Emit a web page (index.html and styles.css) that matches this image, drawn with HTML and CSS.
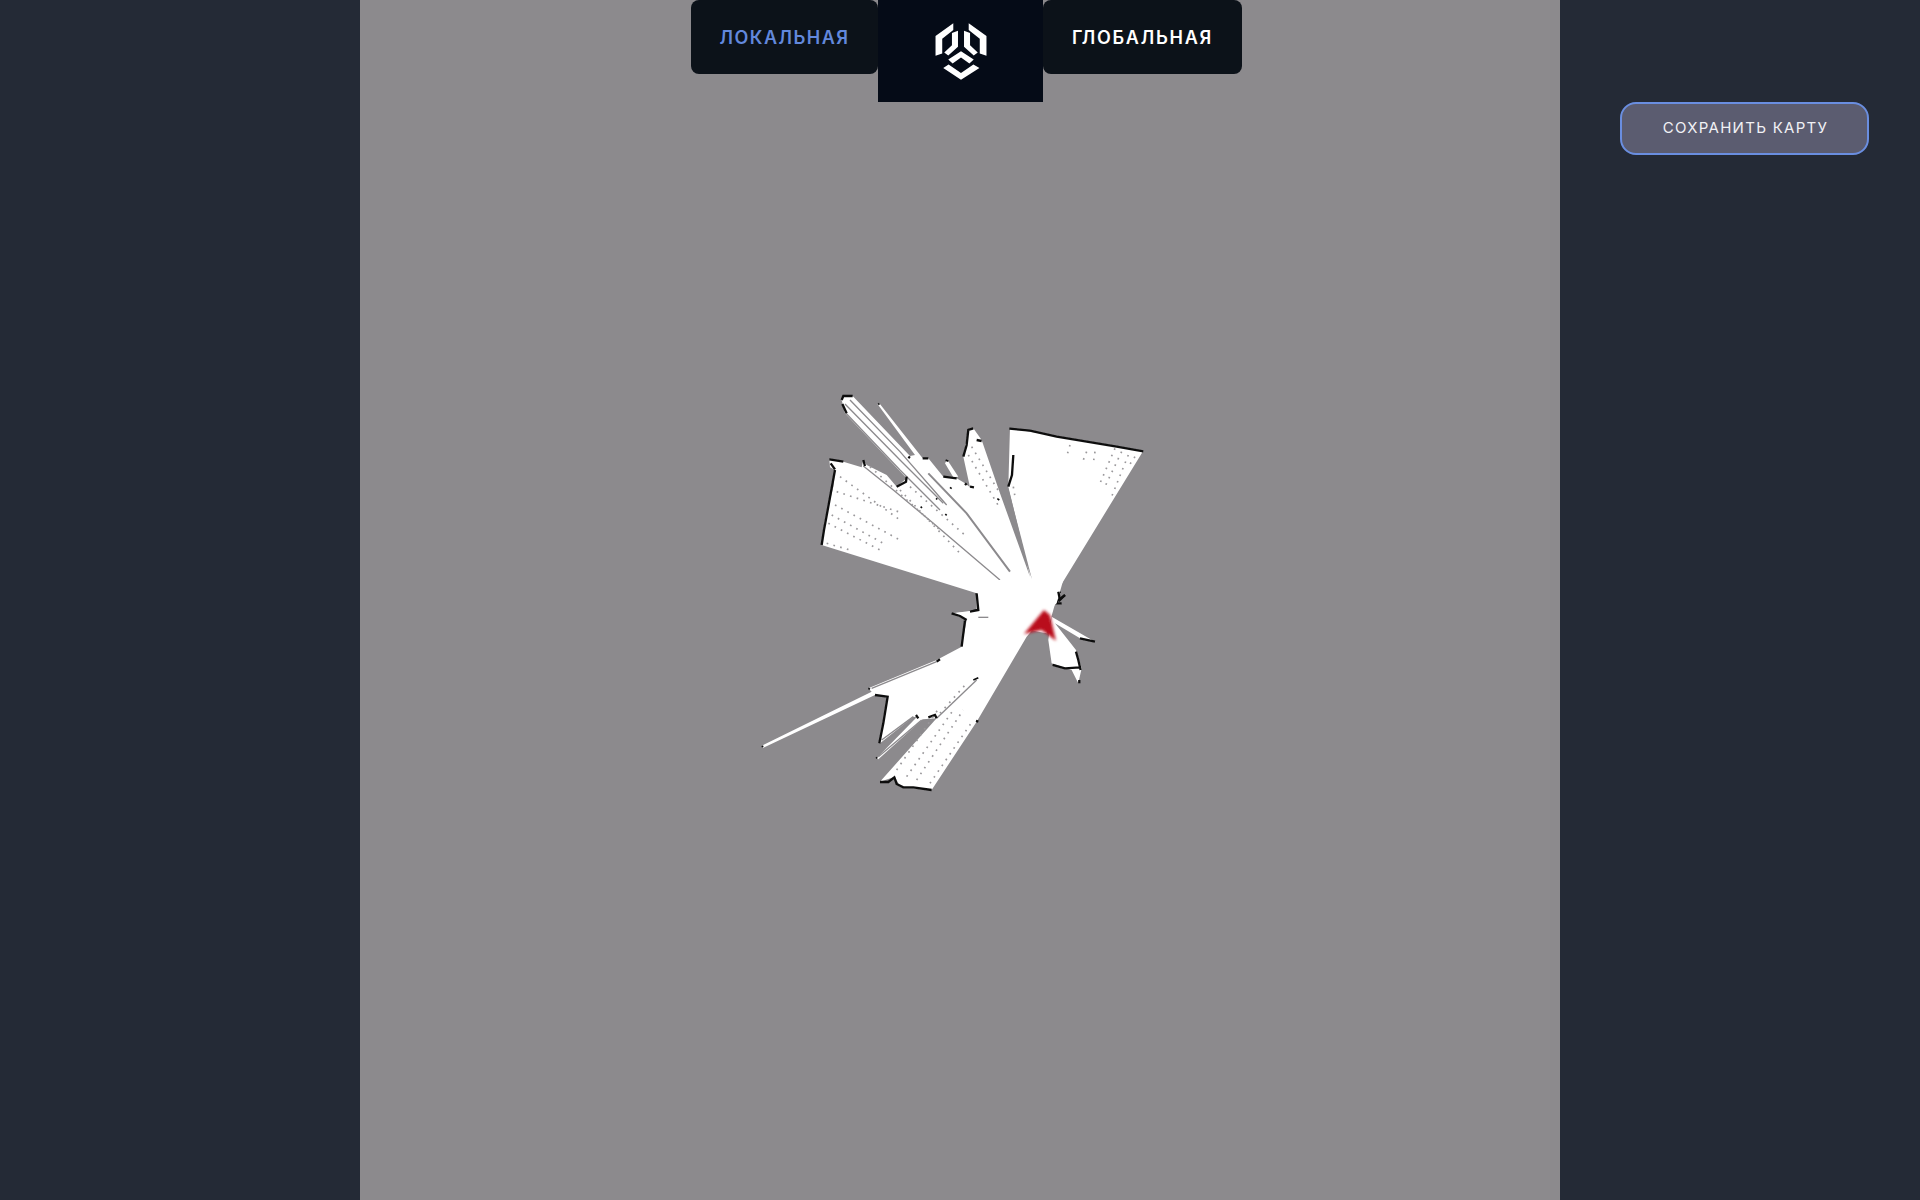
FILE: index.html
```html
<!DOCTYPE html>
<html>

<head>
    <title>Карта</title>
    <link rel="stylesheet" href="styles.css">
</head>

<body>
    <div class="side"></div>

    <div class="map">
        <nav class="tabs">
            <a class="tab tab-left active">ЛОКАЛЬНАЯ</a>
            <div class="logo">
                <svg width="54" height="62" viewBox="100 60 160 185">
                    <polygon points="157,70 157,90 124,116 124,160 104,167 104,108" />
                    <polygon points="153,99 171,92 171,140 142,166 130,157 153,135" />
                    <polygon points="203,70 203,90 236,116 236,160 256,167 256,108" />
                    <polygon points="207,99 189,92 189,140 218,166 230,157 207,135" />
                    <polygon points="180,153 218,178 205,190 180,172 155,190 142,178" />
                    <polygon points="127,203 143,193 180,218 217,193 235,203 180,238" />
                </svg>
            </div>
            <a class="tab tab-right">ГЛОБАЛЬНАЯ</a>
        </nav>

        <svg class="scan" width="1200" height="1200" viewBox="360 0 1200 1200">
            <defs>
                <filter id="soft"><feGaussianBlur stdDeviation="0.4" /></filter>
                <filter id="softer"><feGaussianBlur stdDeviation="4" /></filter>
            </defs>

            <g filter="url(#soft)">
                <!-- upper half of the scan -->
                <g transform="translate(800 380) scale(0.3333)">
                    <polygon class="free" points="65,495 75,420 100,320 105,270 90,262 88,238 130,245 185,262 190,240 200,255 260,285 290,320 320,295 135,100 125,60 130,48 158,48 330,228 345,225 233,73 238,70 368,235 385,235 430,290 470,295 495,310 510,322 490,230 505,150 520,145 545,180 600,340 690,590 625,320 630,145 1030,212 780,620 740,760 520,720 460,700 530,690 530,640" />
                    <polygon class="free" points="435,250 442,240 475,290 460,292" />
                    <polygon class="sliver" points="590,305 625,325 696,598" />
                    <polyline class="gap" points="190,258 280,330 400,430 600,600" />
                    <polyline class="gap-wide" points="385,280 500,400 630,575" />
                    <polyline class="gap" points="135,72 300,240 430,370" />
                    <polyline class="gap" points="150,60 300,215 440,375" />
                    <polyline class="gap" points="138,100 300,270 420,390" />

                    <path class="wall" d="M65 495 L72 450 L85 380 L105 270" />
                    <path class="wall" d="M88 238 L130 245 M92 250 L105 268" />
                    <path class="wall" d="M125 60 L130 48 L158 48 M127 72 L140 100" />
                    <path class="wall" d="M190 240 L195 258 M290 320 L318 305 L320 290 M325 230 L330 234 M368 235 L385 235" />
                    <path class="wall" d="M430 290 L470 295 M495 310 L500 315 M510 320 L522 322" />
                    <path class="wall" d="M490 230 L500 195 L505 150 L520 145 M530 180 L545 183" />
                    <path class="wall" d="M640 225 L636 285 L625 320" />
                    <path class="wall" d="M628 146 L690 152 L770 170 L860 185 L950 200 L1030 214" />
                    <path class="wall-thin" d="M235 70 L238 74 M437 240 L445 244 M450 322 L455 326 M408 355 L412 358 M362 380 L366 384 M436 402 L440 406 M592 356 L598 360" />
                    <path class="wall" d="M530 640 L535 660 L535 690 L515 695 M775 630 L780 640 M770 665 L795 645 M765 670 L785 670" />

                    <path class="dots" d="M110 335 L295 395 M105 375 L300 480 M95 405 L250 490 M85 430 L240 510 M80 490 L150 510 M120 290 L300 420" />
                    <path class="dots" d="M210 260 L420 450 M300 330 L480 520 M330 320 L500 470" />
                    <path class="dots" d="M505 225 L600 385 M515 200 L600 340 M640 320 L645 350" />
                    <path class="dots" d="M945 205 L900 310 M965 215 L915 320 M985 225 L935 350 M810 195 L800 230 M860 215 L850 240 M885 215 L880 250 M1005 230 L985 260" />
                </g>

                <!-- lower half of the scan -->
                <g transform="translate(740 580) scale(0.3333)">
                    <polygon class="free" points="710,0 710,40 715,90 690,95 635,100 680,120 665,200 590,240 385,325 395,335 65,497 70,503 405,345 443,350 420,490 520,410 530,412 410,535 415,538 548,418 590,415 420,605 465,590 480,620 575,630 710,425 860,170 920,100 950,70 970,0" />
                    <polygon class="free" points="935,110 1065,185 1020,175 945,130 1008,210 1025,265 1015,310 995,270 935,250 925,180" />
                    <polyline class="gap-line" points="590,415 710,300" />
                    <polyline class="gap-line" points="395,325 590,245" />
                    <polyline class="gap-line" points="425,480 520,410" />
                    <polyline class="gap-line" points="415,530 545,420" />

                    <path class="wall" d="M710 40 L715 90 L690 95 M635 100 L660 108 L680 120 M675 122 L665 200 M590 245 L600 238" />
                    <path class="wall" d="M405 345 L443 350 L430 430 L418 490 M528 405 L535 415 M565 412 L585 405 L590 415" />
                    <path class="wall" d="M420 606 L445 606 L463 592 L470 612 L490 622 L520 622 L575 630 M708 423 L715 425" />
                    <path class="wall" d="M938 255 L975 265 L1020 262 M1008 215 L1015 240 L1022 270 M1018 300 L1018 310 M1020 175 L1065 185" />
                    <path class="wall" d="M955 35 L960 60 L975 45" />
                    <path class="wall-thin" d="M65 500 L70 498 M385 325 L390 328 M408 535 L412 532 M700 300 L715 293" />

                    <path class="dots" d="M470 570 L600 380 M500 590 L640 390 M530 600 L670 390 M570 610 L700 420 M600 400 L680 310" />
                    <path class="gap-line" d="M715 112 L745 112" />

                    <polygon class="arrow" filter="url(#softer)" points="912,90 930,105 948,182 905,150 852,162" />
                </g>
            </g>
        </svg>
    </div>

    <div class="side side-right">
        <button class="save">СОХРАНИТЬ КАРТУ</button>
    </div>
</body>

</html>
```

FILE: styles.css
```css
body {
    margin: 0;
    display: flex;
    height: 100vh;
    overflow: hidden;
    background: #242a36;
    font-family: Inter, "Liberation Sans", sans-serif;
}

.side {
    width: 360px;
    flex-shrink: 0;
}

.side-right {
    box-sizing: border-box;
    padding: 102px 0 0 60px;
}

.map {
    position: relative;
    width: 1200px;
    flex-shrink: 0;
    background: #8c8a8d;
}

.scan {
    display: block;
}

.tabs {
    position: absolute;
    top: 0;
    left: 331px;
    display: flex;
    align-items: flex-start;
}

.tab {
    display: flex;
    align-items: center;
    justify-content: center;
    box-sizing: border-box;
    height: 74px;
    background: #0c1219;
    color: #fff;
    font-size: 18px;
    font-weight: 600;
    border-radius: 8px;
}

.tab-left {
    width: 187px;
    letter-spacing: 1.5px;
}

.tab-right {
    width: 199px;
    letter-spacing: 1.75px;
}

.active {
    color: #6288dc;
}

.logo {
    display: flex;
    align-items: center;
    justify-content: center;
    width: 165px;
    height: 102px;
    background: #050b17;
}

.logo polygon {
    fill: #fff;
}

.save {
    box-sizing: border-box;
    width: 249px;
    height: 53px;
    padding: 0 0 2px 2px;
    border: 2px solid #6a8ee0;
    border-radius: 16px;
    background: #5b5c70;
    color: #f1f1f5;
    font-family: inherit;
    font-size: 15px;
    letter-spacing: 1.3px;
}

/* scan drawing, stroke widths are in 3x units */
.free {
    fill: #fff;
}

.sliver {
    fill: #8c8a8d;
}

.gap,
.gap-line {
    fill: none;
    stroke: #8c8a8d;
    stroke-width: 4;
}

.gap-wide {
    fill: none;
    stroke: #8c8a8d;
    stroke-width: 6;
}

.wall {
    fill: none;
    stroke: #111;
    stroke-width: 7;
}

.wall-thin {
    fill: none;
    stroke: #111;
    stroke-width: 5;
}

.dots {
    fill: none;
    stroke: #9a989b;
    stroke-width: 5;
    stroke-dasharray: 5 16;
}

.arrow {
    fill: #b9101a;
}
```
